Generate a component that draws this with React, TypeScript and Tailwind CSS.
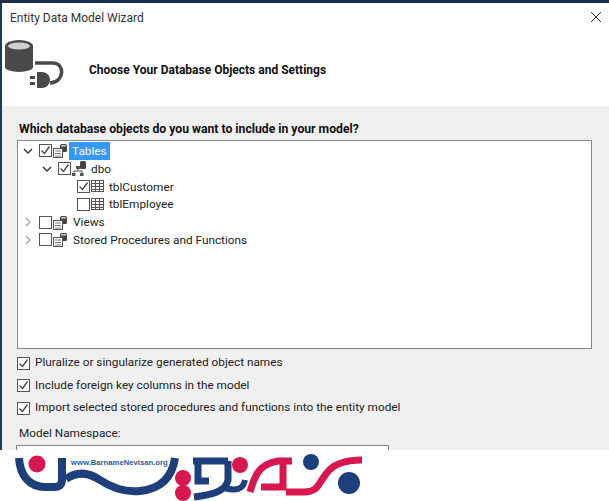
import React from "react";

const Chevron = ({ open }: { open: boolean }) => (
  <svg width="10" height="10" viewBox="0 0 10 10" fill="none" stroke={open ? "#333" : "#a6a6a6"} strokeWidth="1.4">
    {open ? <path d="M1 3l4 4 4-4" /> : <path d="M3 1l4 4-4 4" />}
  </svg>
);

const Check = ({ on, size = 13 }: { on: boolean; size?: number }) => (
  <span className="flex-none border border-[#555] bg-white flex items-center justify-center" style={{ width: size, height: size }}>
    {on && (
      <svg width="11" height="11" viewBox="0 0 11 11" fill="none" stroke="#444" strokeWidth="1.3">
        <path d="M1.500 5.500l3 3 5-7" />
      </svg>
    )}
  </span>
);

const TableIcon = () => (
  <svg width="13" height="12" viewBox="0 0 13 12" fill="none" stroke="#555" strokeWidth="1">
    <rect x="0.500" y="0.500" width="12" height="11" />
    <path d="M0 3.500h13M0 6.500h13M0 9.500h13M4.500 0v12M8.500 0v12" />
  </svg>
);

const GroupIcon = () => (
  <svg width="15" height="15" viewBox="0 0 15 15">
    <rect x="7" y="1" width="7" height="8" rx="1.500" fill="#444" />
    <rect x="8" y="2" width="5" height="1.500" fill="#ccc" />
    <rect x="0.500" y="5.500" width="9" height="9" fill="#fff" stroke="#555" />
    <path d="M2 8h6M2 10.500h6M2 13h6" stroke="#777" />
  </svg>
);

const SchemaIcon = () => (
  <svg width="15" height="15" viewBox="0 0 15 15" fill="none">
    <rect x="8" y="0" width="6" height="8" rx="1.500" fill="#444" />
    <path d="M6 7v3M2 13v-3h8v3" stroke="#555" />
    <rect x="4" y="5" width="4" height="3" fill="#555" />
    <rect x="0" y="12" width="3.500" height="3" fill="#555" />
    <rect x="8" y="12" width="3.500" height="3" fill="#555" />
  </svg>
);

const Row = ({ indent, chev, on, icon, label, selected, labelGap }: { indent: string; chev?: "open" | "closed"; on: boolean; icon: React.ReactNode; label: string; selected?: boolean; labelGap: string }) => (
  <div className={`flex items-center h-[17.800px] ${indent}`}>
    <span className="w-[16px] flex-none flex items-center">{chev && <Chevron open={chev === "open"} />}</span>
    <Check on={on} />
    <span className="ml-[1px] flex-none flex items-center">{icon}</span>
    <span className={`${labelGap} px-[3px] leading-[18px] ${selected ? "bg-[#3399ff] text-white" : "text-[#222]"}`}>{label}</span>
  </div>
);

const Option = ({ label }: { label: string }) => (
  <div className="flex items-center gap-[5px] h-[22.500px]">
    <Check on size={13} />
    <span>{label}</span>
  </div>
);

const Logo = () => (
  <svg width="380" height="51" viewBox="0 0 380 51" className="block">
    <g fill="none" stroke="#1d3f7c">
      <path d="M19 8C20 26 30 37 45 37H54C60 37 62 34 62 29V8" strokeWidth="8" />
      <path d="M66 29C76 22 88 22 100 30C115 40 130 42 140 41C160 39 172 28 175 8" strokeWidth="8" />
      <path d="M193 11H228M198 11V31H209" strokeWidth="7" />
      <path d="M194 47C210 45 226 42 228 30V11" strokeWidth="7" />
      <path d="M224 38C236 41 243 40 245 30" strokeWidth="6" />
    </g>
    <circle cx="37" cy="14" r="8.500" fill="#d8174f" />
    <circle cx="183" cy="28" r="8" fill="#d8174f" />
    <circle cx="183" cy="43" r="8" fill="#d8174f" />
    <circle cx="240" cy="15" r="8" fill="#d8174f" />
    <g fill="none" stroke="#d8174f" strokeWidth="7">
      <path d="M250 42C254 28 258 14 278 11H292" />
      <path d="M261 37H283V11" />
      <path d="M286 42H304C318 42 318 34 326 24C332 15 342 10 362 10" />
    </g>
    <circle cx="311" cy="12" r="8" fill="#1d3f7c" />
    <circle cx="349" cy="33" r="11" fill="#1d3f7c" />
    <text x="71" y="15" fontFamily="Liberation Sans, sans-serif" fontSize="7.700" fontWeight="700" fill="#2f5a96">www.BarnameNevisan.org</text>
  </svg>
);

export default function App() {
  return (
    <div className="w-[609px] h-[501px] overflow-hidden bg-white flex flex-col text-[11.800px] text-[#222]" style={{ fontFamily: 'Roboto, "Open Sans", sans-serif' }}>
      <div className="h-[3px] flex-none bg-[#1c2f4f]" />
      <div className="flex-none h-[103px] border-l-2 border-[#1c3a5c] bg-white relative">
        <div className="pl-[8px] pt-[6px] text-[12px] text-[#333]">Entity Data Model Wizard</div>
        <svg width="14" height="14" viewBox="0 0 14 14" className="absolute right-[6px] top-[7px]" stroke="#333" strokeWidth="1">
          <path d="M2 2l10 10M12 2L2 12" />
        </svg>
        <div className="absolute left-[1px] top-[35px]">
          <svg width="66" height="52" viewBox="0 0 66 52">
            <rect x="2" y="8" width="28" height="22" fill="#4a4a4a" />
            <ellipse cx="16" cy="8" rx="14" ry="6" fill="#4a4a4a" />
            <ellipse cx="16" cy="29" rx="14" ry="5" fill="#4a4a4a" />
            <ellipse cx="16" cy="8" rx="11" ry="3.500" fill="#d0d0d0" />
            <path d="M32 25H50C62 25 62 44 47 45" fill="none" stroke="#4a4a4a" strokeWidth="3.500" />
            <path d="M34 34h5a8 8 0 0 1 0 16h-5z" fill="#4a4a4a" />
            <rect x="27" y="38" width="5" height="3" fill="#4a4a4a" />
            <rect x="27" y="44" width="5" height="3" fill="#4a4a4a" />
          </svg>
        </div>
        <div className="pl-[87px] pt-[34px] font-bold text-[12px] text-[#111]">Choose Your Database Objects and Settings</div>
      </div>
      <div className="flex-1 flex flex-col border-l-2 border-[#1c3a5c] bg-[#f0f0f0] pt-[14px] pl-[15px] pr-[17px] min-h-0">
        <div className="pl-[2px] font-bold text-[12.200px] text-[#111] h-[18px] leading-[18px]">Which database objects do you want to include in your model?</div>
        <div className="mt-[2px] h-[209px] border border-[#888] bg-white pt-[1px] pl-[5px] flex-none">
          <Row indent="" chev="open" on icon={<GroupIcon />} label="Tables" selected labelGap="ml-[1px]" />
          <Row indent="pl-[19px]" chev="open" on icon={<SchemaIcon />} label="dbo" labelGap="ml-[1px]" />
          <Row indent="pl-[38px]" on icon={<TableIcon />} label="tblCustomer" labelGap="ml-[2px]" />
          <Row indent="pl-[38px]" on={false} icon={<TableIcon />} label="tblEmployee" labelGap="ml-[2px]" />
          <Row indent="" chev="closed" on={false} icon={<GroupIcon />} label="Views" labelGap="ml-[2px]" />
          <Row indent="" chev="closed" on={false} icon={<GroupIcon />} label="Stored Procedures and Functions" labelGap="ml-[2px]" />
        </div>
        <div className="mt-[3px] flex flex-col">
          <Option label="Pluralize or singularize generated object names" />
          <Option label="Include foreign key columns in the model" />
          <Option label="Import selected stored procedures and functions into the entity model" />
        </div>
        <div className="pl-[2px] mt-[4px] leading-[18px]">Model Namespace:</div>
        <div className="mt-[3px] -ml-[1px] w-[373px] h-[20px] flex-none border border-[#888] bg-white" />
      </div>
      <div className="h-[51px] flex-none bg-white relative">
        <Logo />
      </div>
    </div>
  );
}
